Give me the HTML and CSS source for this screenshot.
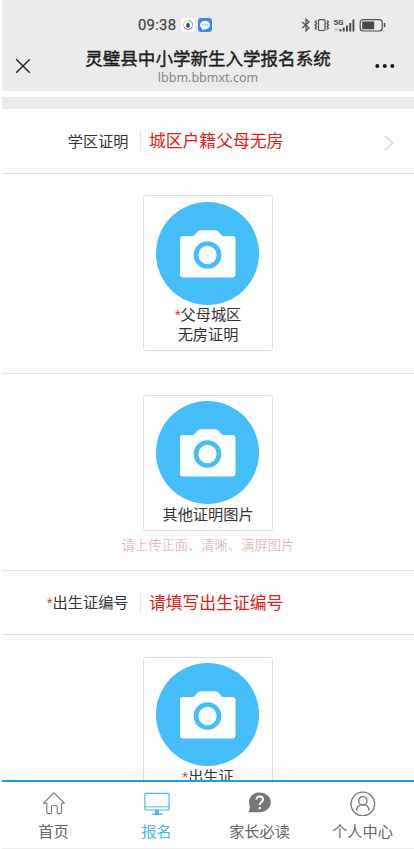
FILE: index.html
```html
<!DOCTYPE html>
<html lang="zh-CN">
<head>
<meta charset="utf-8">
<meta name="viewport" content="width=device-width, initial-scale=1">
<title>灵璧县中小学新生入学报名系统</title>
<link rel="stylesheet" href="styles.css">
</head>
<body>
<svg class="defs" width="0" height="0" aria-hidden="true">
  <symbol id="camera" viewBox="0 0 103 103">
    <circle cx="51.5" cy="51.5" r="51.5" fill="#45bdf8"/>
    <path d="M27 34H37.5L42 29.2Q43 28.3 44.5 28.3H59.5Q61 28.3 62 29.2L66.5 34H76.5Q79.5 34 79.5 37V72.5Q79.5 75.5 76.5 75.5H27Q24 75.5 24 72.5V37Q24 34 27 34Z" fill="#fdfeff"/>
    <circle cx="51.5" cy="53" r="11.5" fill="#fdfeff" stroke="#45bdf8" stroke-width="4.7"/>
  </symbol>
</svg>
<div class="screen">
  <header class="top">
    <div class="status">
      <span class="clock">09:38</span>
      <svg class="app" viewBox="0 0 14 14" width="14" height="14"><rect width="14" height="14" rx="3" fill="#fff"/><g fill="none" stroke-width="1.1"><path d="M2.6 8A4.6 4.6 0 0 1 6 2.5" stroke="#e8d64a"/><path d="M7.5 2.4A4.6 4.6 0 0 1 11.5 7.5" stroke="#3fc4a4"/><path d="M11.2 9A4.6 4.6 0 0 1 3 9" stroke="#e24778"/></g><path d="M7 4Q9 6.5 9 7.7A2 2 0 0 1 5 7.7Q5 6.5 7 4Z" fill="#1554c8"/></svg>
      <svg class="app chat" viewBox="0 0 14 14" width="14" height="14"><rect width="14" height="14" rx="3" fill="#3f83f7"/><path d="M7 2.7C10 2.7 12 4.5 12 7S10 11.2 7 11.2L4 11.9 3.9 10.3C2.6 9.5 2 8.3 2 7 2 4.5 4 2.7 7 2.7Z" fill="#f4f9ff"/><g fill="#6b9ff5"><circle cx="4.7" cy="7" r=".7"/><circle cx="7" cy="7" r=".7"/><circle cx="9.3" cy="7" r=".7"/></g></svg>
      <svg class="signals" viewBox="0 0 86 16" width="86" height="16">
        <g fill="none" stroke="#505050" stroke-width="1.2">
          <path d="M1.2 5 8 11 5 13.8V2.2L8 5 1.2 11"/>
          <rect x="17.5" y="2.7" width="6.5" height="10.8" rx="1"/>
          <path d="M15.6 3.5 14.1 5 15.6 6.5 14.1 8 15.6 9.5 14.1 11 15.6 12.5M26 3.5 27.5 5 26 6.5 27.5 8 26 9.5 27.5 11 26 12.5"/>
          <rect x="59.2" y="2.6" width="22" height="11.4" rx="3"/>
        </g>
        <text x="32.5" y="8" class="net">5G</text>
        <ellipse cx="35.5" cy="12.3" rx="2.4" ry="1.6" fill="#c9c9c9"/>
        <path d="M38.5 12h1.9v2.5h-1.9zM41.8 10.5h1.9v4h-1.9zM45 8.5h1.9v6h-1.9zM48.3 6h1.9v8.5h-1.9zM51.5 2.5h1.9v12h-1.9zM61.2 4.5h12v7.700h-12zM82.8 6h1.5v4h-1.5z" fill="#484848"/>
      </svg>
    </div>
    <div class="bar">
      <svg class="close" viewBox="0 0 16 16" width="16" height="16"><path d="M1.2 1.2 14.8 14.8M14.8 1.2 1.2 14.8" fill="none" stroke="#272727" stroke-width="1.5"/></svg>
      <div class="heading"><h1>灵璧县中小学新生入学报名系统</h1><p>lbbm.bbmxt.com</p></div>
      <svg class="more" viewBox="0 0 20 6" width="20" height="6"><g fill="#161616"><circle cx="2.3" cy="3" r="2"/><circle cx="9.8" cy="3" r="2"/><circle cx="17.3" cy="3" r="2"/></g></svg>
    </div>
  </header>
  <div class="strip"></div>
  <main>
    <div class="field">
      <span class="label">学区证明</span><span class="value">城区户籍父母无房</span>
      <svg class="chevron" viewBox="0 0 10 16" width="10" height="16"><path d="M.8.8 8.8 8 .8 15.2" fill="none" stroke="#d2d2d2" stroke-width="1.3"/></svg>
    </div>
    <section class="upload first">
      <div class="card"><svg width="103" height="103"><use href="#camera"/></svg><p><i>*</i>父母城区<br>无房证明</p></div>
    </section>
    <section class="upload second">
      <div class="card"><svg width="103" height="103"><use href="#camera"/></svg><p>其他证明图片</p></div>
      <p class="hint">请上传正面、清晰、满屏图片</p>
    </section>
    <div class="field number">
      <span class="label"><i>*</i>出生证编号</span><span class="value">请填写出生证编号</span>
    </div>
    <section class="upload third">
      <div class="card"><svg width="103" height="103"><use href="#camera"/></svg><p><i>*</i>出生证</p></div>
    </section>
  </main>
  <nav>
    <a><svg viewBox="0 0 26 26" width="26" height="26"><path d="M2.5 13.3 13 2.6 23.5 13.3H20.5V22Q20.5 23.6 19 23.6H17.2Q16.2 23.6 16.2 22.5V16.5Q16.2 15.5 15.2 15.5H11.5Q10.5 15.5 10.5 16.5V22.5Q10.5 23.6 9.5 23.6H7.3Q5.8 23.6 5.8 22V13.3Z" fill="none" stroke="#777" stroke-width="1.1" stroke-linejoin="round"/></svg><span>首页</span></a>
    <a class="active"><svg viewBox="0 0 26 26" width="26" height="26"><rect x=".9" y="3.3" width="24.2" height="16.7" rx="1" fill="none" stroke="#4bb9ea" stroke-width="1.2"/><path d="M1 16.8H25" stroke="#4bb9ea"/><path d="M11 20h4v3.5h3.5V25h-10v-1.5H11z" fill="#4bb9ea"/></svg><span>报名</span></a>
    <a><svg viewBox="0 0 26 26" width="26" height="26"><path d="M12.5 2.5C19 2.5 23.8 6.8 23.8 12.3S19 22.3 12.5 22.3H2Q1.2 21.5 2.6 19.8L2.9 16.5Q2 14.5 2 12.3C2 6.8 6.5 2.5 12.5 2.5Z" fill="#777"/><path d="M9.5 9.5C9.5 5.5 16 5.7 16 9.5 16 12 12.7 12 12.7 15" fill="none" stroke="#fff" stroke-width="2"/><circle cx="12.7" cy="18" r="1.3" fill="#fff"/></svg><span>家长必读</span></a>
    <a><svg viewBox="0 0 26 26" width="26" height="26"><g fill="none" stroke="#777" stroke-width="1.35"><circle cx="12.8" cy="14" r="11.8"/><circle cx="12.8" cy="10.8" r="4.2"/><path d="M6.6 20.5C6.8 16.5 9.3 14.6 12.8 14.6S18.8 16.5 19 20.5"/></g></svg><span>个人中心</span></a>
  </nav>
</div>
</body>
</html>
```

FILE: styles.css
```css
* { box-sizing: border-box; margin: 0; padding: 0; }
html, body { height: 100%; overflow: hidden; }
body { background: #fff; color: #333; font-family: "Noto Sans", "Noto Sans CJK SC", sans-serif; }
svg { display: block; flex: none; }
.defs { position: absolute; }
i { font: 15px/1 "Liberation Sans", sans-serif; color: #dc2a20; }
.screen { height: 849px; padding-left: 2px; display: flex; flex-direction: column; }
.top { height: 91px; flex: none; background: #ebebeb; padding-top: 13px; }
.status { height: 24px; display: flex; align-items: center; padding-left: 136px; }
.clock { width: 43px; font: 400 14.8px/24px Roboto, sans-serif; letter-spacing: .3px; color: #444; -webkit-text-stroke: .25px #444; }
.chat { margin-left: 3px; }
.signals { margin-left: 89px; }
.net { font: bold 8px Roboto, sans-serif; fill: #484848; }
.bar { height: 54px; display: grid; grid-template-columns: 60px 1fr 60px; align-items: center; }
.close { margin-left: 13px; margin-top: 4px; }
.more { margin-left: 21px; margin-top: 4px; }
.heading { text-align: center; align-self: start; padding-top: 9px; }
h1 { font: 400 17.55px/24px "Noto Sans CJK SC", sans-serif; color: #1c1c1c; white-space: nowrap; -webkit-text-stroke: .4px #1c1c1c; }
.heading p { font-size: 12.5px; line-height: 16px; color: #858585; }
.strip { height: 18px; flex: none; border-top: 6px solid #fdfdfd; background: #ebebeb; }
main { height: 671px; flex: none; overflow: hidden; background: #fdfdfd; }
.field { height: 65px; display: flex; align-items: center; border-bottom: 1px solid #dedede; }
.label { width: 126.5px; text-align: right; font-size: 15.2px; line-height: 24px; margin-top: -1px; }
.value { margin-left: 11.5px; padding-left: 8px; border-left: 1px solid #e4e4e4; height: 20px; font-size: 16.8px; line-height: 20px; color: #dd2119; }
.chevron { margin: 3px 20px 0 auto; }
.upload { display: flex; flex-direction: column; align-items: center; padding-top: 21px; border-bottom: 1px solid #e3e3e3; }
.first { height: 200px; }
.second { height: 197px; }
.number { height: 64px; }
.third { height: 180px; padding-top: 22px; }
.card { width: 130px; height: 156px; border: 1px solid #dedede; border-radius: 3px; display: flex; flex-direction: column; align-items: center; padding-top: 5.5px; background: #fefefe; }
.card svg { margin-left: -1px; }
.second .card { height: 136px; }
.third .card, .second .card { padding-top: 5px; }
.card p { margin-top: -.5px; font-size: 15.2px; line-height: 20.4px; text-align: center; white-space: nowrap; }
.hint { margin-top: 2px; font: 300 13.3px/24px "Noto Sans CJK SC", sans-serif; color: #dba7a5; }
nav { height: 69px; flex: none; display: grid; grid-template-columns: repeat(4, 1fr); border-top: 2px solid #1e9fd8; border-bottom: 1px solid #eee; background: #fdfdfd; }
nav a { display: flex; flex-direction: column; align-items: center; padding-top: 8px; font-size: 15.2px; line-height: 24px; color: #666; }
nav span { margin-top: 3px; }
nav .active { color: #4bb9ea; }
```
